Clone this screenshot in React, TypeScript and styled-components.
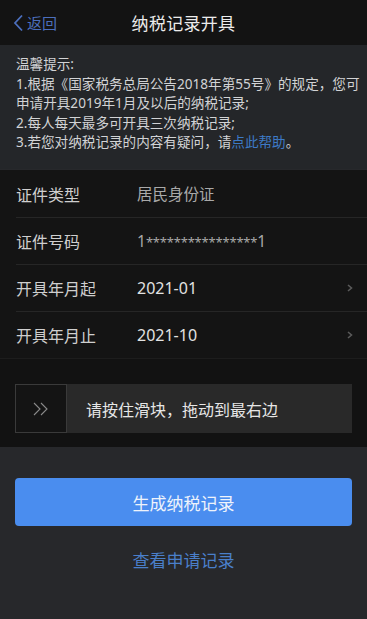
import React from 'react';
import styled, { createGlobalStyle } from 'styled-components';

const GlobalStyle = createGlobalStyle`
  html, body {
    margin: 0;
    padding: 0;
    background: #27282b;
  }
  body {
    font-family: "Noto Sans", "Noto Sans CJK SC", sans-serif;
    -webkit-font-smoothing: antialiased;
  }
`;

const Page = styled.div`
  width: 367px;
  min-height: 619px;
  display: flex;
  flex-direction: column;
  background: #27282b;
`;

const NavBar = styled.div`
  height: 45px;
  display: grid;
  grid-template-columns: 1fr auto 1fr;
  align-items: center;
  background: #131313;
`;

const BackButton = styled.div`
  display: flex;
  align-items: center;
  gap: 3px;
  padding-left: 13px;
  color: #4c6fbd;
  font-size: 15px;
`;

const Title = styled.div`
  color: #ececec;
  font-size: 17px;
  letter-spacing: 0.3px;
`;

const Tips = styled.div`
  height: 124px;
  box-sizing: border-box;
  padding: 9px 16px 0;
  background: #242629;
  color: #d2d3d5;
  font-size: 13.6px;
  line-height: 19.5px;
`;

const TipLine = styled.div`
  white-space: nowrap;
`;

const Link = styled.span`
  color: #3d7ac6;
`;

const List = styled.div`
  margin-top: 1px;
  background: #141414;
`;

const Row = styled.div`
  height: 47px;
  display: flex;
  align-items: center;
  padding-left: 16px;
  position: relative;

  & + &::before {
    content: '';
    position: absolute;
    left: 16px;
    right: 0;
    top: 0;
    height: 1px;
    background: #262626;
  }
`;

const Label = styled.div`
  width: 121px;
  color: #cfcfcf;
  font-size: 16px;
`;

const Value = styled.div<{ $bright?: boolean }>`
  flex: 1;
  color: ${p => (p.$bright ? '#e2e2e2' : '#a9a9a9')};
  font-size: ${p => (p.$bright ? '16px' : '15.5px')};
`;

const Masked = styled.span`
  font-size: 13px;
  letter-spacing: -0.2px;
`;

const Arrow = styled.div`
  width: 15px;
  padding-right: 5px;
  display: flex;
  color: #5a5a5a;
`;

const SliderBand = styled.div`
  height: 89px;
  box-sizing: border-box;
  padding: 25px 15px 0;
  background: #121212;
  border-top: 1px solid #1d1d1d;
`;

const Slider = styled.div`
  height: 49px;
  display: flex;
  background: #292929;
`;

const Handle = styled.div`
  width: 52px;
  box-sizing: border-box;
  border: 1px solid #3a3a3a;
  background: #141414;
  display: flex;
  align-items: center;
  justify-content: center;
`;

const SliderText = styled.div`
  flex: 1;
  display: flex;
  align-items: center;
  padding-left: 19px;
  color: #e6e6e6;
  font-size: 16px;
`;

const Actions = styled.div`
  padding: 31px 15px 0;
  display: flex;
  flex-direction: column;
  align-items: stretch;
`;

const PrimaryButton = styled.div`
  height: 48px;
  border-radius: 4px;
  background: #4a8def;
  color: #eef3fb;
  font-size: 17px;
  display: flex;
  align-items: center;
  justify-content: center;
`;

const TextLink = styled.div`
  margin-top: 20px;
  text-align: center;
  color: #4a7fca;
  font-size: 17px;
  line-height: 30px;
`;

const Chevron = () => (
  <svg width="6" height="8" viewBox="0 0 6 8">
    <path d="M1 1 L4.5 4 L1 7" stroke="currentColor" strokeWidth="1.6" fill="none" />
  </svg>
);

const rows = [
  { label: '证件类型', value: '居民身份证' },
  { label: '证件号码', value: 'id' },
  { label: '开具年月起', value: '2021-01', bright: true, arrow: true },
  { label: '开具年月止', value: '2021-10', bright: true, arrow: true },
];

const App: React.FC = () => {
  return (
    <>
      <GlobalStyle />
      <Page>
        <NavBar>
          <BackButton>
            <svg width="11" height="18" viewBox="0 0 11 18">
              <path d="M9 1.5 L2 9 L9 16.5" stroke="#4c6fbd" strokeWidth="1.8" fill="none" />
            </svg>
            返回
          </BackButton>
          <Title>纳税记录开具</Title>
          <div />
        </NavBar>

        <Tips>
          <TipLine>温馨提示:</TipLine>
          <TipLine>1.根据《国家税务总局公告2018年第55号》的规定，您可</TipLine>
          <TipLine>申请开具2019年1月及以后的纳税记录;</TipLine>
          <TipLine>2.每人每天最多可开具三次纳税记录;</TipLine>
          <TipLine>
            3.若您对纳税记录的内容有疑问，请<Link>点此帮助</Link>。
          </TipLine>
        </Tips>

        <List>
          {rows.map(r => (
            <Row key={r.label}>
              <Label>{r.label}</Label>
              <Value $bright={r.bright}>
                {r.value === 'id' ? (
                  <>
                    1<Masked>****************</Masked>1
                  </>
                ) : (
                  r.value
                )}
              </Value>
              {r.arrow && (
                <Arrow>
                  <Chevron />
                </Arrow>
              )}
            </Row>
          ))}
        </List>

        <SliderBand>
          <Slider>
            <Handle>
              <svg width="18" height="14" viewBox="0 0 18 14">
                <path d="M2 1 L8 7 L2 13 M9 1 L15 7 L9 13" stroke="#8a8a8a" strokeWidth="1.1" fill="none" />
              </svg>
            </Handle>
            <SliderText>请按住滑块，拖动到最右边</SliderText>
          </Slider>
        </SliderBand>

        <Actions>
          <PrimaryButton>生成纳税记录</PrimaryButton>
          <TextLink>查看申请记录</TextLink>
        </Actions>
      </Page>
    </>
  );
};

export default App;
